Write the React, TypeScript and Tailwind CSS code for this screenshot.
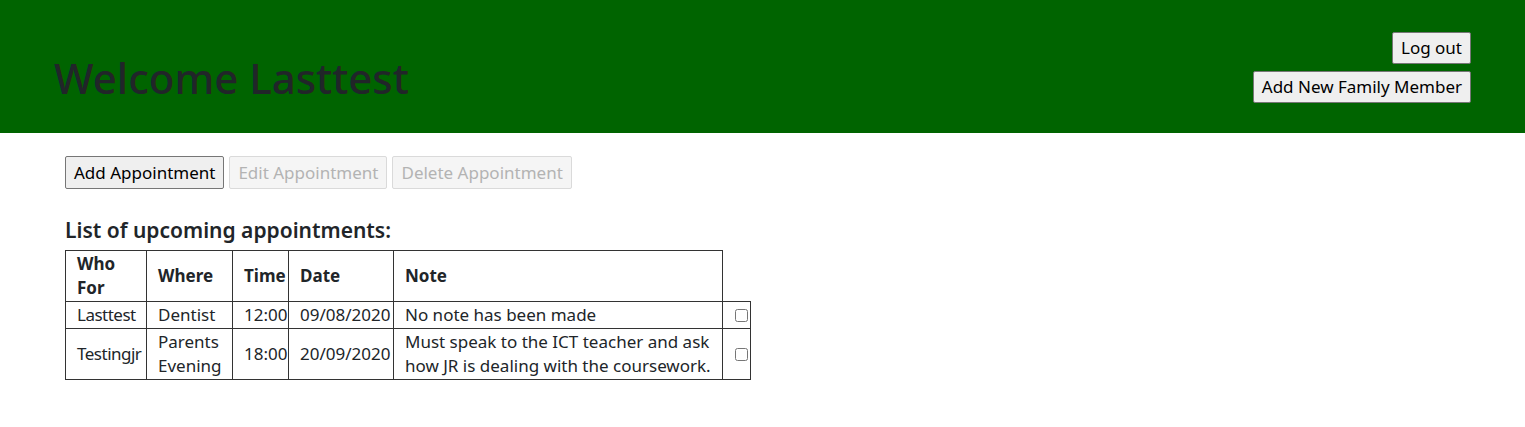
import React from "react";

interface Appointment {
  who: string;
  where: string;
  time: string;
  date: string;
  note: string;
}

const appointments: Appointment[] = [
  { who: "Lasttest", where: "Dentist", time: "12:00", date: "09/08/2020", note: "No note has been made" },
  {
    who: "Testingjr",
    where: "Parents Evening",
    time: "18:00",
    date: "20/09/2020",
    note: "Must speak to the ICT teacher and ask how JR is dealing with the coursework.",
  },
];

const btn =
  "bg-[#efefef] border border-[#767676] rounded-[2px] px-[8px] py-[3px] text-[17px] leading-[24px] text-black";
const btnDisabled =
  "bg-[#f5f5f5] border border-[#dadada] rounded-[2px] px-[8px] py-[3px] text-[17px] leading-[25px] text-[#b3b3b3]";

const cell = "border border-[#333] py-[1px] align-middle";

export default function App() {
  return (
    <div className="min-h-screen bg-white text-[#212529] font-['Noto_Sans',sans-serif] text-[17px] leading-[24px]">
      {/* Header */}
      <header className="bg-[#006400] h-[133px] flex justify-between items-start px-[54px]">
        <h1 className="pt-[54px] text-[42px] leading-[48px] font-medium text-[#212529]">Welcome Lasttest</h1>
        <div className="pt-[32px] flex flex-col items-end gap-[7px]">
          <button className={btn}>Log out</button>
          <button className={btn}>Add New Family Member</button>
        </div>
      </header>

      <main className="px-[65px] pt-[23px]">
        {/* Actions */}
        <div className="flex gap-[5px]">
          <button className={`${btn} leading-[25px]`}>Add Appointment</button>
          <button className={btnDisabled} disabled>
            Edit Appointment
          </button>
          <button className={btnDisabled} disabled>
            Delete Appointment
          </button>
        </div>

        <h5 className="mt-[29px] mb-[8px] text-[21px] leading-[24px] font-semibold">List of upcoming appointments:</h5>

        {/* Appointment table */}
        <table className="border-collapse table-fixed w-[686px]">
          <colgroup>
            <col className="w-[81px]" />
            <col className="w-[86px]" />
            <col className="w-[56px]" />
            <col className="w-[105px]" />
            <col className="w-[329px]" />
            <col className="w-[28px]" />
          </colgroup>
          <thead>
            <tr>
              {["Who For", "Where", "Time", "Date", "Note"].map((h) => (
                <th key={h} className={`${cell} text-left font-bold pl-[11px] pr-[1px]`}>
                  {h === "Who For" ? (
                    <>
                      Who
                      <br />
                      For
                    </>
                  ) : (
                    h
                  )}
                </th>
              ))}
            </tr>
          </thead>
          <tbody>
            {appointments.map((a) => (
              <tr key={a.who}>
                <td className={`${cell} pl-[11px] pr-[1px] whitespace-nowrap tracking-[-0.5px]`}>{a.who}</td>
                <td className={`${cell} pl-[11px] pr-[1px]`}>
                  {a.where === "Parents Evening" ? (
                    <>
                      Parents
                      <br />
                      Evening
                    </>
                  ) : (
                    a.where
                  )}
                </td>
                <td className={`${cell} pl-[11px] pr-[1px]`}>{a.time}</td>
                <td className={`${cell} pl-[11px] pr-[1px]`}>{a.date}</td>
                <td className={`${cell} pl-[11px] pr-[6px]`}>{a.note}</td>
                <td className={`${cell} pl-[12px] pr-[2px]`}>
                  <input type="checkbox" className="w-[13px] h-[13px] block" />
                </td>
              </tr>
            ))}
          </tbody>
        </table>
      </main>
    </div>
  );
}
